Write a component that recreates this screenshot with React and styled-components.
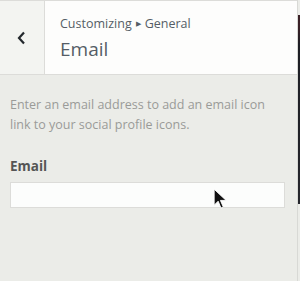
import React from "react";
import styled, { createGlobalStyle } from "styled-components";

const Global = createGlobalStyle`
  html, body { margin: 0; padding: 0; background: #ebece8; }
  body { font-family: "Open Sans", "Noto Sans", sans-serif; width: 300px; height: 281px; overflow: hidden; }
`;

const Frame = styled.div`
  display: flex;
  width: 300px;
  height: 281px;
`;

const Panel = styled.div`
  width: 297px;
  height: 281px;
  background: #ebece8;
  border-right: 1px solid #d8d9d5;
  display: flex;
  flex-direction: column;
`;

const Strip = styled.div`
  width: 2px;
  margin-top: 15px;
  height: 189px;
  background: linear-gradient(#3a2026 0, #3a2026 12px, #1d1e24 30px, #25262c 100%);
`;

const Header = styled.div`
  display: flex;
  height: 73px;
  border-top: 1px solid #dcdcd9;
  border-bottom: 1px solid #dcdcd9;
  background: #fdfdfc;
`;

const Back = styled.button`
  width: 45px;
  border: 0;
  border-right: 1px solid #dcdcd9;
  background: #f3f4f1;
  display: flex;
  align-items: center;
  justify-content: center;
  padding: 0;
`;

const Titles = styled.div`
  padding: 14px 0 0 15px;
  display: flex;
  flex-direction: column;
`;

const Crumb = styled.div`
  font-size: 12.5px;
  color: #555d66;
  line-height: 18px;
  display: flex;
  align-items: center;
  gap: 4px;
`;

const Arrow = styled.span`
  font-size: 7px;
  color: #555d66;
`;

const Title = styled.div`
  font-size: 19px;
  color: #555d66;
  line-height: 28px;
  margin-top: 2px;
`;

const Body = styled.div`
  padding: 20px 10px 0 10px;
  position: relative;
`;

const Desc = styled.p`
  margin: 0;
  font-size: 12.5px;
  line-height: 20px;
  color: #9a9b98;
`;

const Label = styled.div`
  margin-top: 21px;
  font-size: 13.5px;
  font-weight: 700;
  color: #555;
  line-height: 20px;
`;

const Input = styled.input`
  box-sizing: border-box;
  margin-top: 6px;
  width: 275px;
  height: 26px;
  border: 1px solid #dcdcd9;
  background: #fcfdfc;
  outline: none;
  display: block;
`;

const Pointer = styled.svg`
  position: absolute;
  left: 213px;
  top: 113px;
`;

export default function App() {
  return (
    <>
      <Global />
      <Frame>
        <Panel>
          <Header>
            <Back aria-label="Back">
              <svg width="10" height="14" viewBox="0 0 10 14">
                <path d="M7 1.5 L2 7 L7 12.5" fill="none" stroke="#23282d" strokeWidth="2.2" />
              </svg>
            </Back>
            <Titles>
              <Crumb>
                Customizing <Arrow>▶</Arrow> General
              </Crumb>
              <Title>Email</Title>
            </Titles>
          </Header>
          <Body>
            <Desc>Enter an email address to add an email icon link to your social profile icons.</Desc>
            <Label>Email</Label>
            <Input type="text" />
            <Pointer width="16" height="23" viewBox="0 0 14 20">
              <path d="M1 1 L1 15 L4.5 11.5 L7 17.5 L9 16.5 L6.5 10.8 L11.5 10.8 Z" fill="#111" stroke="#fff" strokeWidth="0.8" />
            </Pointer>
          </Body>
        </Panel>
        <Strip />
      </Frame>
    </>
  );
}
